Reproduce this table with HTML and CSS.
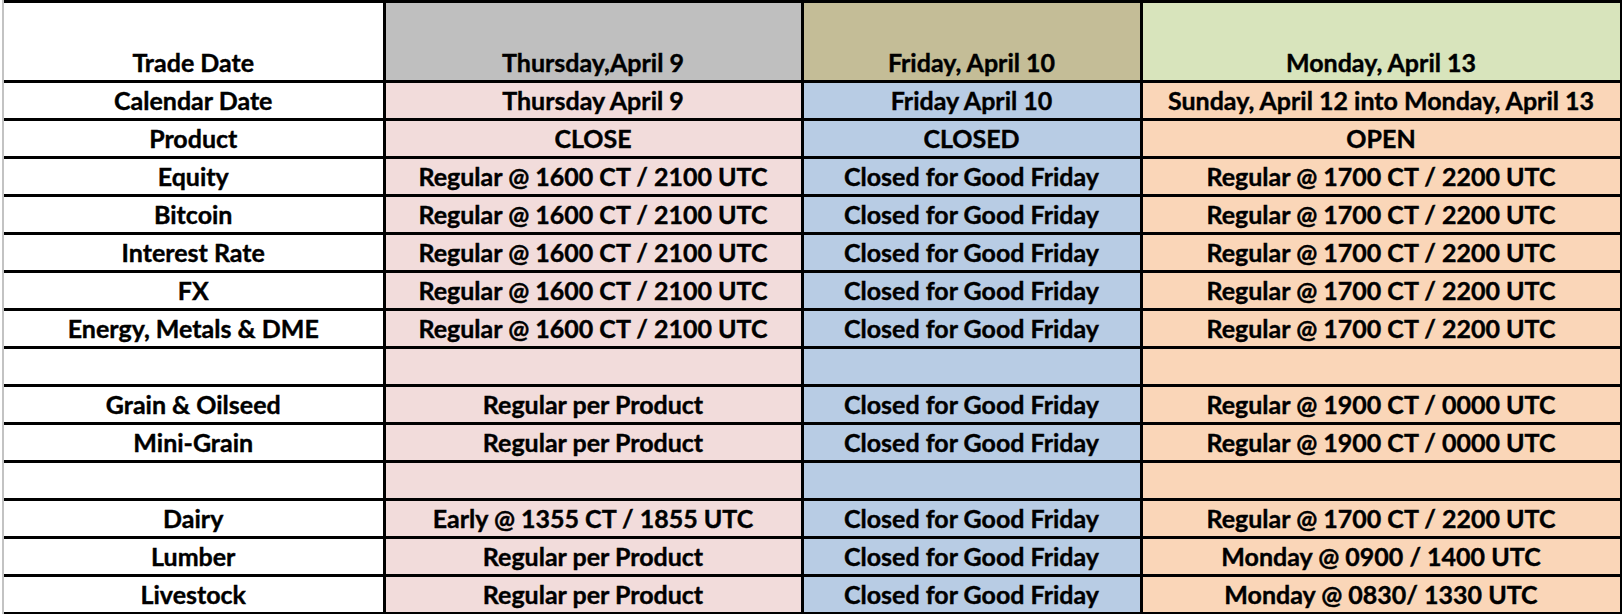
FILE: index.html
```html
<!DOCTYPE html>
<html>
<head>
<meta charset="utf-8">
<link rel="stylesheet" href="styles.css">
</head>
<body>
<div class="sheet">
<table class="grid">
  <colgroup>
    <col class="c1"><col class="c2"><col class="c3"><col class="c4">
  </colgroup>
  <tr class="head">
    <td class="lab">Trade Date</td>
    <td class="thu-h">Thursday,April 9</td>
    <td class="fri-h">Friday, April 10</td>
    <td class="mon-h">Monday, April 13</td>
  </tr>
  <tr>
    <td class="lab">Calendar Date</td>
    <td class="thu">Thursday April 9</td>
    <td class="fri">Friday April 10</td>
    <td class="mon">Sunday, April 12 into Monday, April 13</td>
  </tr>
  <tr>
    <td class="lab">Product</td>
    <td class="thu">CLOSE</td>
    <td class="fri">CLOSED</td>
    <td class="mon">OPEN</td>
  </tr>
  <tr>
    <td class="lab">Equity</td>
    <td class="thu">Regular @ 1600 CT / 2100 UTC</td>
    <td class="fri">Closed for Good Friday</td>
    <td class="mon">Regular @ 1700 CT / 2200 UTC</td>
  </tr>
  <tr>
    <td class="lab">Bitcoin</td>
    <td class="thu">Regular @ 1600 CT / 2100 UTC</td>
    <td class="fri">Closed for Good Friday</td>
    <td class="mon">Regular @ 1700 CT / 2200 UTC</td>
  </tr>
  <tr>
    <td class="lab">Interest Rate</td>
    <td class="thu">Regular @ 1600 CT / 2100 UTC</td>
    <td class="fri">Closed for Good Friday</td>
    <td class="mon">Regular @ 1700 CT / 2200 UTC</td>
  </tr>
  <tr>
    <td class="lab">FX</td>
    <td class="thu">Regular @ 1600 CT / 2100 UTC</td>
    <td class="fri">Closed for Good Friday</td>
    <td class="mon">Regular @ 1700 CT / 2200 UTC</td>
  </tr>
  <tr>
    <td class="lab">Energy, Metals &amp; DME</td>
    <td class="thu">Regular @ 1600 CT / 2100 UTC</td>
    <td class="fri">Closed for Good Friday</td>
    <td class="mon">Regular @ 1700 CT / 2200 UTC</td>
  </tr>
  <tr>
    <td class="lab"></td>
    <td class="thu"></td>
    <td class="fri"></td>
    <td class="mon"></td>
  </tr>
  <tr>
    <td class="lab">Grain &amp; Oilseed</td>
    <td class="thu">Regular per Product</td>
    <td class="fri">Closed for Good Friday</td>
    <td class="mon">Regular @ 1900 CT / 0000 UTC</td>
  </tr>
  <tr>
    <td class="lab">Mini-Grain</td>
    <td class="thu">Regular per Product</td>
    <td class="fri">Closed for Good Friday</td>
    <td class="mon">Regular @ 1900 CT / 0000 UTC</td>
  </tr>
  <tr>
    <td class="lab"></td>
    <td class="thu"></td>
    <td class="fri"></td>
    <td class="mon"></td>
  </tr>
  <tr>
    <td class="lab">Dairy</td>
    <td class="thu">Early @ 1355 CT / 1855 UTC</td>
    <td class="fri">Closed for Good Friday</td>
    <td class="mon">Regular @ 1700 CT / 2200 UTC</td>
  </tr>
  <tr>
    <td class="lab">Lumber</td>
    <td class="thu">Regular per Product</td>
    <td class="fri">Closed for Good Friday</td>
    <td class="mon">Monday @ 0900 / 1400 UTC</td>
  </tr>
  <tr>
    <td class="lab">Livestock</td>
    <td class="thu">Regular per Product</td>
    <td class="fri">Closed for Good Friday</td>
    <td class="mon">Monday @ 0830/ 1330 UTC</td>
  </tr>
</table>
</div>
</body>
</html>
```

FILE: styles.css
```css
html, body {
  margin: 0;
  padding: 0;
  background: #ffffff;
}

.sheet {
  margin-left: 2px;
  border-left: 2px solid #c3c3c3;
  width: 1618px;
}

.grid {
  border-collapse: collapse;
  table-layout: fixed;
  width: 1617px;
  font-family: Lato, "Open Sans", sans-serif;
  font-weight: 700;
  font-size: 25px;
  color: #000;
  -webkit-text-stroke: 0.4px #000;
}

.c1 { width: 380px; }
.c2 { width: 418px; }
.c3 { width: 339px; }
.c4 { width: 480px; }

.grid td {
  border: 3px solid #000;
  height: 35px;
  padding: 0 2px 0 2px;
  text-align: center;
  vertical-align: bottom;
  line-height: 35px;
  white-space: nowrap;
  overflow: hidden;
}

.grid td.lab {
  border-left: none;
  background: #ffffff;
}

.head td {
  height: 77px;
  line-height: 35px;
}

.thu-h { background: #bfbfbf; }
.fri-h { background: #c4bd97; }
.mon-h { background: #d8e4bc; }

.thu { background: #f2dcdb; }
.fri { background: #b8cce4; }
.mon { background: #fad6b8; }
```
